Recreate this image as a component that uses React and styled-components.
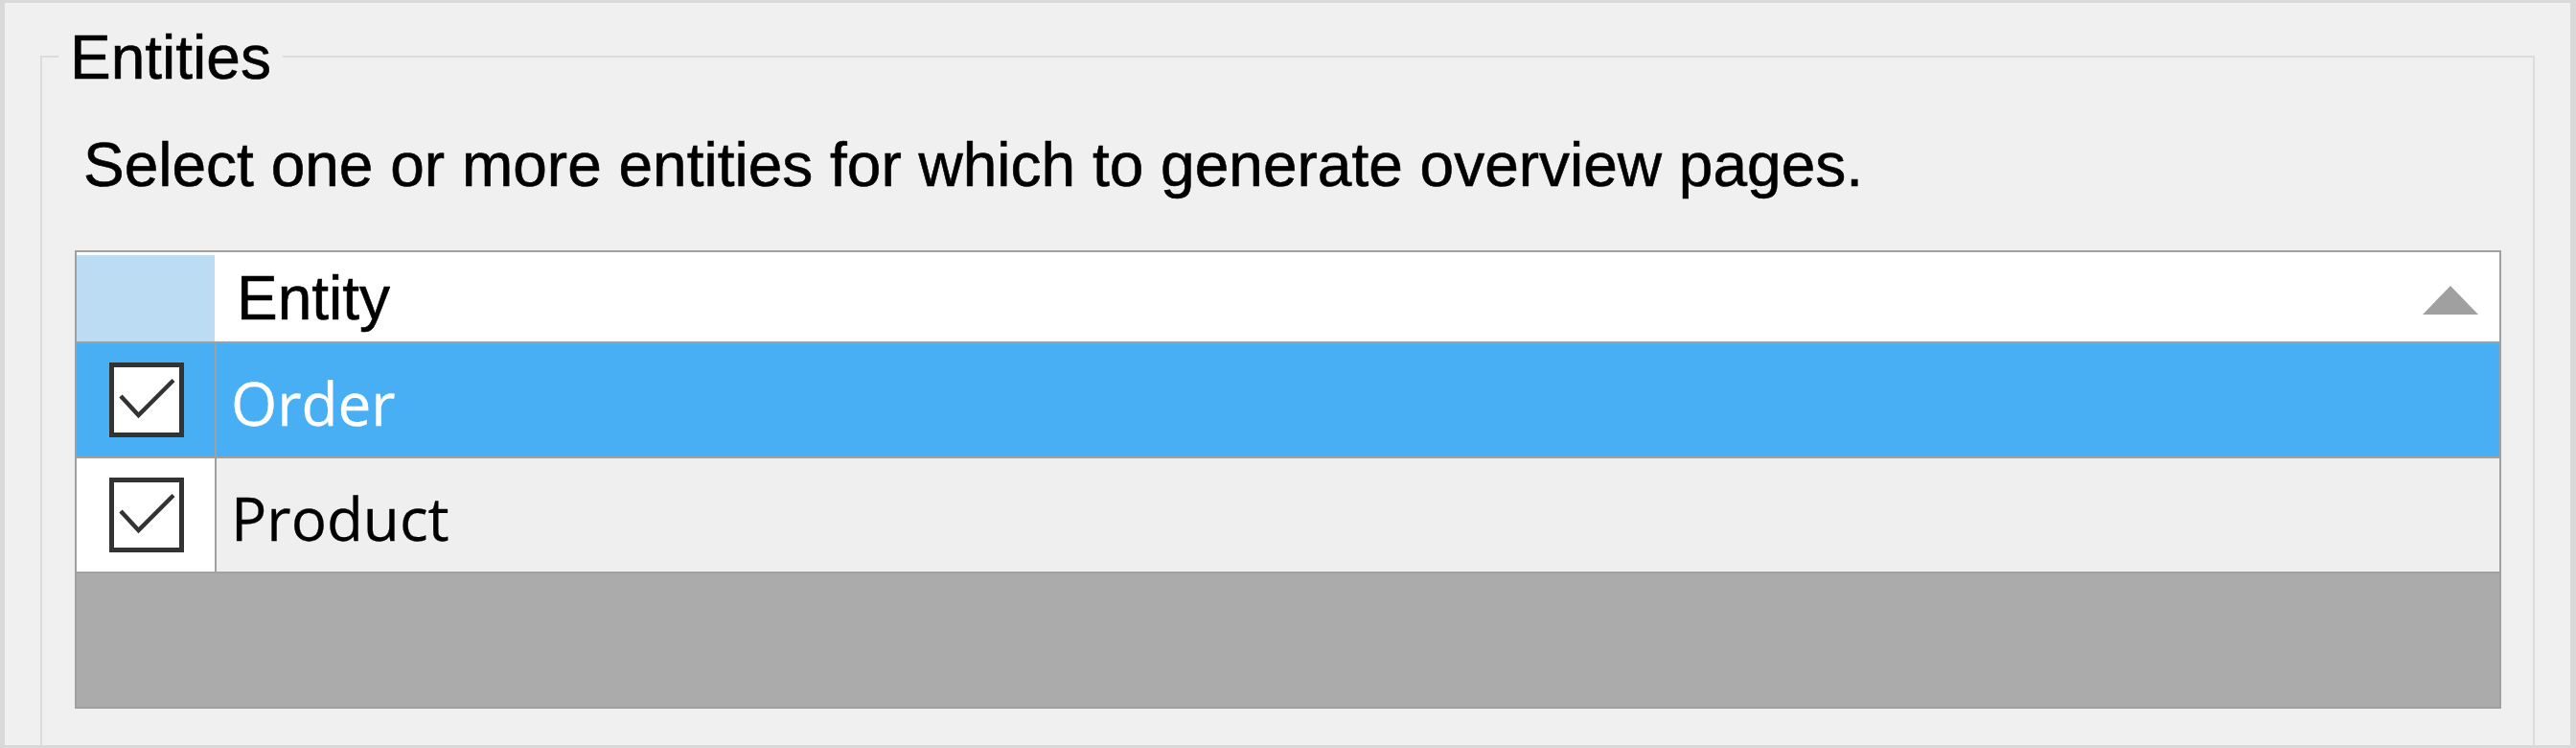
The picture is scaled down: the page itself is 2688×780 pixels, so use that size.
import React from "react";
import styled, { createGlobalStyle } from "styled-components";

const GlobalStyle = createGlobalStyle`
  html, body {
    margin: 0;
    padding: 0;
    background: #f0f0f0;
  }
`;

const entities = [
  { name: "Order", checked: true, selected: true },
  { name: "Product", checked: true, selected: false },
];

const CheckIcon = () => (
  <svg width="68" height="68" viewBox="0 0 68 68" fill="none">
    <polyline points="7,30 25.5,50 62,13.5" stroke="#333" strokeWidth="4.5" strokeLinejoin="miter" />
  </svg>
);

const SortArrow = () => (
  <svg width="58" height="30" viewBox="0 0 58 30">
    <polygon points="0,30 29,0 58,30" fill="#a0a0a0" />
  </svg>
);

const EntitiesDialog = () => {
  return (
    <Frame>
      <GlobalStyle />
      <GroupBox>
        <Legend>Entities</Legend>
        <Description>Select one or more entities for which to generate overview pages.</Description>
        <DataGrid>
          <HeaderRow>
            <CornerCell />
            <ColumnHeader>
              <span>Entity</span>
              <SortArrow />
            </ColumnHeader>
          </HeaderRow>
          {entities.map((entity) => (
            <Row key={entity.name} $selected={entity.selected}>
              <RowHeader $selected={entity.selected}>
                <CheckBox>{entity.checked && <CheckIcon />}</CheckBox>
              </RowHeader>
              <Cell $selected={entity.selected}>{entity.name}</Cell>
            </Row>
          ))}
        </DataGrid>
      </GroupBox>
    </Frame>
  );
};

const Frame = styled.div`
  width: 2688px;
  height: 780px;
  box-sizing: border-box;
  border-style: solid;
  border-color: #d9d9d9;
  border-width: 3px 6px 3px 5px;
  background: #f0f0f0;
  padding: 0 37px;
  display: flex;
  flex-direction: column;
  overflow: hidden;
  font-family: "Liberation Sans", Arial, sans-serif;
  color: #000;
  -webkit-text-stroke: 0.6px currentColor;
`;

const GroupBox = styled.fieldset`
  margin: 17px 0 0 0;
  padding: 0;
  min-width: 0;
  flex: 1;
  border: 2px solid #dcdcdc;
  border-bottom: none;
  display: flex;
  flex-direction: column;
`;

const Legend = styled.legend`
  margin-left: 17px;
  padding: 3px 12px 0;
  font-size: 64px;
  line-height: 74px;
`;

const Description = styled.p`
  margin: 38px 0 0 43px;
  font-size: 64px;
  line-height: 74px;
`;

const DataGrid = styled.div`
  margin: 52px 33px 0 34px;
  height: 478px;
  box-sizing: border-box;
  border: 2px solid #a0a0a0;
  background: #ababab;
  display: flex;
  flex-direction: column;
`;

const HeaderRow = styled.div`
  display: flex;
  height: 95px;
  box-sizing: border-box;
  padding-top: 3px;
  background: #fff;
  border-bottom: 2px solid #a0a0a0;
`;

const CornerCell = styled.div`
  width: 144px;
  background: #bcdcf4;
`;

const ColumnHeader = styled.div`
  flex: 1;
  display: flex;
  align-items: center;
  justify-content: space-between;
  padding: 0 22px 0 23px;
  font-size: 64px;

  svg {
    margin-top: 4px;
  }
`;

const Row = styled.div`
  display: flex;
  height: 120px;
  box-sizing: border-box;
  border-bottom: 2px solid #a0a0a0;
`;

const RowHeader = styled.div`
  width: 142px;
  border-right: 2px solid #a0a0a0;
  background: ${(p) => (p.$selected ? "#48aff5" : "#fff")};
  display: flex;
  align-items: center;
  justify-content: center;
  padding-left: 2px;
`;

const CheckBox = styled.span`
  width: 78px;
  height: 78px;
  box-sizing: border-box;
  border: 5px solid #333;
  background: #fff;
  display: flex;
  align-items: center;
  justify-content: center;
`;

const Cell = styled.div`
  flex: 1;
  display: flex;
  align-items: center;
  padding: 5px 0 0 15px;
  background: ${(p) => (p.$selected ? "#48aff5" : "#efefef")};
  color: ${(p) => (p.$selected ? "#fff" : "#000")};
  font-family: "Segoe UI", "Open Sans", sans-serif;
  font-size: 62px;
  -webkit-text-stroke: 0.3px currentColor;
`;

export default EntitiesDialog;
